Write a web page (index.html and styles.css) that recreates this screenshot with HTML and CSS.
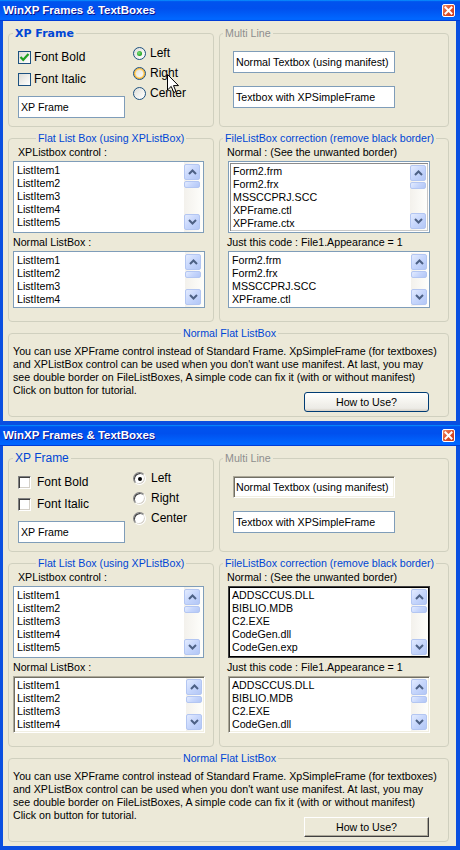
FILE: index.html
```html
<!DOCTYPE html>
<html>
<head>
<meta charset="utf-8">
<title>WinXP Frames &amp; TextBoxes</title>
<link rel="stylesheet" href="styles.css">
</head>
<body>

<div class="window">
  <div class="titlebar">
    <span class="title">WinXP Frames &amp; TextBoxes</span>
    <span class="close"><svg width="11" height="11" viewBox="0 0 11 11"><path d="M2.5 2.5 L8.5 8.5 M8.5 2.5 L2.5 8.5" stroke="#fff" stroke-width="2" stroke-linecap="square"/></svg></span>
  </div>
  <div class="client">
    <div class="row row-top">
      <div class="group g-left">
        <span class="gtitle gt-bold">XP Frame</span>
        <div class="xp-body">
          <div class="col-l">
            <div class="opt"><span class="cb"><svg width="11" height="11" viewBox="0 0 11 11"><path d="M1.5 5 L4.2 7.8 L9.5 2" fill="none" stroke="#21A121" stroke-width="2.2"/></svg></span><span class="opt-label">Font Bold</span></div>
            <div class="opt"><span class="cb"></span><span class="opt-label">Font Italic</span></div>
            <div class="tb tb-xp tb-small">XP Frame</div>
          </div>
          <div class="col-r">
            <div class="opt"><span class="rb rb-on"></span><span class="opt-label">Left</span></div>
            <div class="opt"><span class="rb rb-hover"></span><span class="opt-label">Right</span></div>
            <div class="opt"><span class="rb"></span><span class="opt-label">Center</span></div>
          </div>
        </div>
      </div>
      <div class="group g-right">
        <span class="gtitle gt-gray">Multi Line</span>
        <div class="tb tb-xp tb-wide tb-first">Normal Textbox (using manifest)</div>
        <div class="tb tb-xp tb-wide tb-second">Textbox with XPSimpleFrame</div>
      </div>
    </div>

    <div class="row row-lists">
      <div class="group g-left">
        <span class="gtitle gt-flat">Flat List Box (using XPListBox)</span>
        <div class="lbl lbl-first lbl-indent">XPListbox control :</div>
        <div class="lb lb-xp lb-tall lb-l">
          <div class="lb-items"><div>ListItem1</div><div>ListItem2</div><div>ListItem3</div><div>ListItem4</div><div>ListItem5</div></div>
          <div class="sb"><span class="sb-btn"><svg width="9" height="6" viewBox="0 0 9 6"><path d="M1 5 L4.5 1.5 L8 5" fill="none" stroke="#4D6185" stroke-width="2"/></svg></span><span class="sb-thumb"></span><span class="sb-fill"></span><span class="sb-btn"><svg width="9" height="6" viewBox="0 0 9 6"><path d="M1 1 L4.5 4.5 L8 1" fill="none" stroke="#4D6185" stroke-width="2"/></svg></span></div>
        </div>
        <div class="lbl lbl-second">Normal ListBox :</div>
        <div class="lb lb-xp lb-short lb-l2">
          <div class="lb-items"><div>ListItem1</div><div>ListItem2</div><div>ListItem3</div><div>ListItem4</div></div>
          <div class="sb"><span class="sb-btn"><svg width="9" height="6" viewBox="0 0 9 6"><path d="M1 5 L4.5 1.5 L8 5" fill="none" stroke="#4D6185" stroke-width="2"/></svg></span><span class="sb-thumb"></span><span class="sb-fill"></span><span class="sb-btn"><svg width="9" height="6" viewBox="0 0 9 6"><path d="M1 1 L4.5 4.5 L8 1" fill="none" stroke="#4D6185" stroke-width="2"/></svg></span></div>
        </div>
      </div>
      <div class="group g-right">
        <span class="gtitle gt-file">FileListBox correction (remove black border)</span>
        <div class="lbl lbl-first lbl-r">Normal : (See the unwanted border)</div>
        <div class="lb lb-xp lb-double lb-tall lb-r">
          <div class="lb-items"><div>Form2.frm</div><div>Form2.frx</div><div>MSSCCPRJ.SCC</div><div>XPFrame.ctl</div><div>XPFrame.ctx</div></div>
          <div class="sb"><span class="sb-btn"><svg width="9" height="6" viewBox="0 0 9 6"><path d="M1 5 L4.5 1.5 L8 5" fill="none" stroke="#4D6185" stroke-width="2"/></svg></span><span class="sb-thumb"></span><span class="sb-fill"></span><span class="sb-btn"><svg width="9" height="6" viewBox="0 0 9 6"><path d="M1 1 L4.5 4.5 L8 1" fill="none" stroke="#4D6185" stroke-width="2"/></svg></span></div>
        </div>
        <div class="lbl lbl-second lbl-r">Just this code : File1.Appearance = 1</div>
        <div class="lb lb-xp lb-short lb-r lb-pad">
          <div class="lb-items"><div>Form2.frm</div><div>Form2.frx</div><div>MSSCCPRJ.SCC</div><div>XPFrame.ctl</div></div>
          <div class="sb"><span class="sb-btn"><svg width="9" height="6" viewBox="0 0 9 6"><path d="M1 5 L4.5 1.5 L8 5" fill="none" stroke="#4D6185" stroke-width="2"/></svg></span><span class="sb-thumb"></span><span class="sb-fill"></span><span class="sb-btn"><svg width="9" height="6" viewBox="0 0 9 6"><path d="M1 1 L4.5 4.5 L8 1" fill="none" stroke="#4D6185" stroke-width="2"/></svg></span></div>
        </div>
      </div>
    </div>

    <div class="group g-bottom">
      <span class="gtitle gt-bottom">Normal Flat ListBox</span>
      <div class="desc">
        <div class="line">You can use XPFrame control instead of Standard Frame. XpSimpleFrame (for textboxes)</div>
        <div class="line">and XPListBox control can be used when you don't want use manifest. At last, you may</div>
        <div class="line">see double border on FileListBoxes, A simple code can fix it (with or without manifest)</div>
        <div class="last-row">
          <div class="line">Click on button for tutorial.</div>
          <button class="btn btn-xp">How to Use?</button>
        </div>
      </div>
    </div>
  </div>
  <svg class="cursor" width="13" height="20" viewBox="0 0 13 20"><path d="M0.5 0.5 L0.5 16 L4.2 12.4 L6.8 18.5 L9 17.5 L6.5 11.6 L11.5 11.6 Z" fill="#fff" stroke="#000" stroke-width="1"/></svg>
</div>

<div class="window w-classic">
  <div class="titlebar">
    <span class="title">WinXP Frames &amp; TextBoxes</span>
    <span class="close"><svg width="11" height="11" viewBox="0 0 11 11"><path d="M2.5 2.5 L8.5 8.5 M8.5 2.5 L2.5 8.5" stroke="#fff" stroke-width="2" stroke-linecap="square"/></svg></span>
  </div>
  <div class="client">
    <div class="row row-top">
      <div class="group g-left">
        <span class="gtitle gt-reg">XP Frame</span>
        <div class="xp-body">
          <div class="col-l">
            <div class="opt"><span class="cb cb-classic"></span><span class="opt-label">Font Bold</span></div>
            <div class="opt"><span class="cb cb-classic"></span><span class="opt-label">Font Italic</span></div>
            <div class="tb tb-xp tb-small">XP Frame</div>
          </div>
          <div class="col-r">
            <div class="opt"><span class="rb rb-classic rb-on"></span><span class="opt-label">Left</span></div>
            <div class="opt"><span class="rb rb-classic"></span><span class="opt-label">Right</span></div>
            <div class="opt"><span class="rb rb-classic"></span><span class="opt-label">Center</span></div>
          </div>
        </div>
      </div>
      <div class="group g-right">
        <span class="gtitle gt-gray">Multi Line</span>
        <div class="tb tb-sunken tb-wide tb-first">Normal Textbox (using manifest)</div>
        <div class="tb tb-xp tb-wide tb-second">Textbox with XPSimpleFrame</div>
      </div>
    </div>

    <div class="row row-lists">
      <div class="group g-left">
        <span class="gtitle gt-flat">Flat List Box (using XPListBox)</span>
        <div class="lbl lbl-first lbl-indent">XPListbox control :</div>
        <div class="lb lb-xp lb-tall lb-l">
          <div class="lb-items"><div>ListItem1</div><div>ListItem2</div><div>ListItem3</div><div>ListItem4</div><div>ListItem5</div></div>
          <div class="sb"><span class="sb-btn"><svg width="9" height="6" viewBox="0 0 9 6"><path d="M1 5 L4.5 1.5 L8 5" fill="none" stroke="#4D6185" stroke-width="2"/></svg></span><span class="sb-thumb"></span><span class="sb-fill"></span><span class="sb-btn"><svg width="9" height="6" viewBox="0 0 9 6"><path d="M1 1 L4.5 4.5 L8 1" fill="none" stroke="#4D6185" stroke-width="2"/></svg></span></div>
        </div>
        <div class="lbl lbl-second">Normal ListBox :</div>
        <div class="lb lb-sunken lb-short lb-l2">
          <div class="lb-items"><div>ListItem1</div><div>ListItem2</div><div>ListItem3</div><div>ListItem4</div></div>
          <div class="sb"><span class="sb-btn"><svg width="9" height="6" viewBox="0 0 9 6"><path d="M1 5 L4.5 1.5 L8 5" fill="none" stroke="#4D6185" stroke-width="2"/></svg></span><span class="sb-thumb"></span><span class="sb-fill"></span><span class="sb-btn"><svg width="9" height="6" viewBox="0 0 9 6"><path d="M1 1 L4.5 4.5 L8 1" fill="none" stroke="#4D6185" stroke-width="2"/></svg></span></div>
        </div>
      </div>
      <div class="group g-right">
        <span class="gtitle gt-file">FileListBox correction (remove black border)</span>
        <div class="lbl lbl-first lbl-r">Normal : (See the unwanted border)</div>
        <div class="lb lb-black lb-tall lb-r">
          <div class="lb-items"><div>ADDSCCUS.DLL</div><div>BIBLIO.MDB</div><div>C2.EXE</div><div>CodeGen.dll</div><div>CodeGen.exp</div></div>
          <div class="sb"><span class="sb-btn"><svg width="9" height="6" viewBox="0 0 9 6"><path d="M1 5 L4.5 1.5 L8 5" fill="none" stroke="#4D6185" stroke-width="2"/></svg></span><span class="sb-thumb"></span><span class="sb-fill"></span><span class="sb-btn"><svg width="9" height="6" viewBox="0 0 9 6"><path d="M1 1 L4.5 4.5 L8 1" fill="none" stroke="#4D6185" stroke-width="2"/></svg></span></div>
        </div>
        <div class="lbl lbl-second lbl-r">Just this code : File1.Appearance = 1</div>
        <div class="lb lb-sunken lb-short lb-r lb-pad">
          <div class="lb-items"><div>ADDSCCUS.DLL</div><div>BIBLIO.MDB</div><div>C2.EXE</div><div>CodeGen.dll</div></div>
          <div class="sb"><span class="sb-btn"><svg width="9" height="6" viewBox="0 0 9 6"><path d="M1 5 L4.5 1.5 L8 5" fill="none" stroke="#4D6185" stroke-width="2"/></svg></span><span class="sb-thumb"></span><span class="sb-fill"></span><span class="sb-btn"><svg width="9" height="6" viewBox="0 0 9 6"><path d="M1 1 L4.5 4.5 L8 1" fill="none" stroke="#4D6185" stroke-width="2"/></svg></span></div>
        </div>
      </div>
    </div>

    <div class="group g-bottom">
      <span class="gtitle gt-bottom">Normal Flat ListBox</span>
      <div class="desc">
        <div class="line">You can use XPFrame control instead of Standard Frame. XpSimpleFrame (for textboxes)</div>
        <div class="line">and XPListBox control can be used when you don't want use manifest. At last, you may</div>
        <div class="line">see double border on FileListBoxes, A simple code can fix it (with or without manifest)</div>
        <div class="last-row">
          <div class="line">Click on button for tutorial.</div>
          <button class="btn btn-classic">How to Use?</button>
        </div>
      </div>
    </div>
  </div>
</div>

</body>
</html>
```

FILE: styles.css
```css
* { box-sizing: border-box; }

body {
  margin: 0;
  background: #ffffff;
  font-family: "Liberation Sans", Arial, sans-serif;
  font-size: 10.67px;
  color: #000;
}

.window {
  position: relative;
  width: 460px;
  height: 425px;
  display: flex;
  flex-direction: column;
}

.titlebar {
  flex: none;
  height: 21px;
  display: flex;
  align-items: center;
  justify-content: space-between;
  padding: 0 5px 0 3px;
  background: linear-gradient(180deg, #0997ff, #0053ee 8%, #0050ee 40%, #0066ff 88%, #0066ff 93%, #005bff 95%, #003dd7 96%, #003dd7);
}

.title {
  color: #fff;
  font-weight: bold;
  font-size: 11.5px;
  line-height: 13px;
  text-shadow: 1px 1px #0f1089;
  white-space: nowrap;
}

.close {
  width: 13px;
  height: 13px;
  border: 1px solid #fff;
  border-radius: 2px;
  background: linear-gradient(135deg, #f0906a 0%, #e0552f 45%, #c8391c 100%);
  display: flex;
  align-items: center;
  justify-content: center;
}

.client {
  flex: 1;
  background: #ECE9D8;
  border-style: solid;
  border-color: #0A4FE0;
  border-width: 0 4px 4px 3px;
  padding: 12px 7px 4px 5px;
  display: flex;
  flex-direction: column;
  gap: 11px;
}

.row {
  display: flex;
  gap: 5px;
}

.group {
  border: 1px solid #D0D0BF;
  border-radius: 4px;
}

.g-left { width: 206px; }
.g-right { width: 230px; }
.row-top .group { height: 94px; }
.row-lists .group { height: 184px; }
.g-bottom { height: 84px; }

.gtitle {
  display: table;
  margin: -7px 0 0 0;
  padding: 0 2px;
  background: #ECE9D8;
  line-height: 13px;
  color: #0046D5;
  white-space: nowrap;
}

.gt-bold {
  font-family: "DejaVu Sans", sans-serif;
  font-weight: bold;
  font-size: 11px;
  margin-left: 4px;
}
.gt-reg {
  font-size: 12px;
  margin-left: 4px;
}
.gt-gray {
  color: #8E8E8E;
  margin-left: 3px;
}
.gt-flat { margin-left: 27px; }
.gt-file { margin-left: 3px; }
.gt-bottom { margin-left: 172px; }

/* XP frame body */
.xp-body {
  display: flex;
}
.col-l {
  width: 124px;
  padding: 11px 0 0 9px;
  display: flex;
  flex-direction: column;
  gap: 9px;
}
.col-r {
  padding-top: 7px;
  display: flex;
  flex-direction: column;
  gap: 7px;
}

.opt {
  display: flex;
  align-items: center;
  height: 13px;
}
.opt-label {
  font-size: 12px;
  line-height: 13px;
  margin-left: 3px;
  white-space: nowrap;
}
.col-r .opt-label { margin-left: 4px; }
.w-classic .col-l .opt-label { margin-left: 6px; }
.w-classic .col-r .opt-label { margin-left: 5px; }

.cb {
  flex: none;
  width: 13px;
  height: 13px;
  border: 1px solid #1C5180;
  background: linear-gradient(135deg, #DCDCD7 0%, #F2F2EF 60%, #FFFFFF 100%);
  display: flex;
  align-items: center;
  justify-content: center;
}
.cb-classic {
  border-color: #808080 #fff #fff #808080;
  background: #fff;
  box-shadow: inset 1px 1px #404040, inset -1px -1px #D4D0C8;
}

.rb {
  flex: none;
  width: 13px;
  height: 13px;
  border-radius: 50%;
  border: 1px solid #1C5180;
  background: linear-gradient(135deg, #DCDCD7 0%, #F4F4F1 60%, #FFFFFF 100%);
  display: flex;
  align-items: center;
  justify-content: center;
}
.rb-on::after {
  content: "";
  width: 5px;
  height: 5px;
  border-radius: 50%;
  background: radial-gradient(circle at 40% 40%, #7ee07e, #21A121 70%);
}
.rb-hover {
  box-shadow: inset 0 0 0 1px #F8B636, inset 0 0 0 2px #FEDB8C;
}
.rb-classic {
  border-color: #808080 #fff #fff #808080;
  background: #fff;
  box-shadow: inset 1px 1px #404040, inset -1px -1px #D4D0C8;
}
.rb-classic.rb-on::after {
  width: 4px;
  height: 4px;
  background: #000;
}

/* text boxes */
.tb {
  height: 22px;
  background: #fff;
  display: flex;
  align-items: center;
  padding-left: 2px;
  white-space: nowrap;
}
.tb-xp { border: 1px solid #7F9DB9; }
.tb-sunken {
  border: 1px solid;
  border-color: #ACA899 #fff #fff #ACA899;
  box-shadow: inset 1px 1px #716F64, inset -1px -1px #F1EFE2;
}
.tb-small {
  width: 107px;
  margin-top: 1px;
}
.tb-wide {
  width: 162px;
  margin-left: 13px;
}
.tb-first { margin-top: 11px; }
.tb-second { margin-top: 13px; }

/* labels */
.lbl {
  line-height: 13px;
  white-space: nowrap;
  padding-left: 4px;
}
.lbl-first { margin-top: 1px; }
.lbl-second { margin-top: 3px; }
.lbl-indent { padding-left: 9px; }
.lbl-r { padding-left: 7px; }

/* list boxes */
.lb {
  display: flex;
  background: #fff;
  overflow: hidden;
  margin-top: 2px;
}
.lb-tall { height: 72px; }
.lb-short { height: 57px; }
.lb-l { width: 191px; margin-left: 4px; }
.lb-l2 { width: 192px; margin-left: 4px; }
.lb-r { width: 202px; margin-left: 8px; }

.lb-xp { border: 1px solid #7F9DB9; }
.lb-double {
  padding: 2px;
  box-shadow: inset 1px 1px #fff, inset -1px -1px #fff, inset 2px 2px #8A8A8A, inset -2px -2px #C8C8C8;
}
.lb-pad { padding: 1px; }
.lb-black {
  border: 1px solid #404040;
  padding: 1px;
  box-shadow: inset 0 0 0 1px #000;
}
.lb-sunken {
  border: 1px solid;
  border-color: #ACA899 #fff #fff #ACA899;
  padding: 1px;
  box-shadow: inset 1px 1px #716F64, inset -1px -1px #F1EFE2;
}

.lb-items {
  flex: 1;
  padding: 2px 0 0 3px;
  line-height: 13px;
  white-space: nowrap;
  overflow: hidden;
}
.lb-double .lb-items,
.lb-pad .lb-items,
.lb-black .lb-items,
.lb-sunken .lb-items { padding: 1px 0 0 2px; }

.sb {
  flex: none;
  width: 19px;
  padding: 2px 3px 2px 0;
  display: flex;
  flex-direction: column;
  background: linear-gradient(90deg, #F3F1EC, #FEFEFB);
}
.lb-double .sb,
.lb-pad .sb,
.lb-black .sb,
.lb-sunken .sb { width: 17px; padding: 1px 1px 1px 0; }

.sb-btn {
  flex: none;
  height: 16px;
  border: 1px solid #B3C6F2;
  border-radius: 2px;
  background: linear-gradient(135deg, #E3EBFE 0%, #C6D6FC 50%, #B3C7F6 100%);
  display: flex;
  align-items: center;
  justify-content: center;
}
.sb-thumb {
  flex: none;
  height: 7px;
  margin-top: 1px;
  border: 1px solid #B3C6F2;
  border-radius: 2px;
  background: linear-gradient(135deg, #E3EBFE 0%, #C6D6FC 50%, #B3C7F6 100%);
}
.sb-fill { flex: 1; }

/* description */
.desc {
  margin-top: 5px;
  padding-left: 4px;
}
.line {
  line-height: 13px;
  white-space: nowrap;
}
.last-row {
  display: flex;
  align-items: flex-start;
}
.btn {
  margin: 8px 19px 0 auto;
  width: 125px;
  height: 20px;
  font-family: "Liberation Sans", Arial, sans-serif;
  font-size: 10.67px;
  color: #000;
  padding: 0;
}
.btn-xp {
  border: 1px solid #003C74;
  border-radius: 3px;
  background: linear-gradient(180deg, #FFFFFF 0%, #F4F3EE 50%, #ECEBE6 85%, #D6D0C5 100%);
}
.btn-classic {
  border: 1px solid;
  border-color: #fff #404040 #404040 #fff;
  background: #ECE9D8;
  box-shadow: inset -1px -1px #ACA899;
}

.cursor {
  position: absolute;
  left: 167px;
  top: 74px;
}
```
